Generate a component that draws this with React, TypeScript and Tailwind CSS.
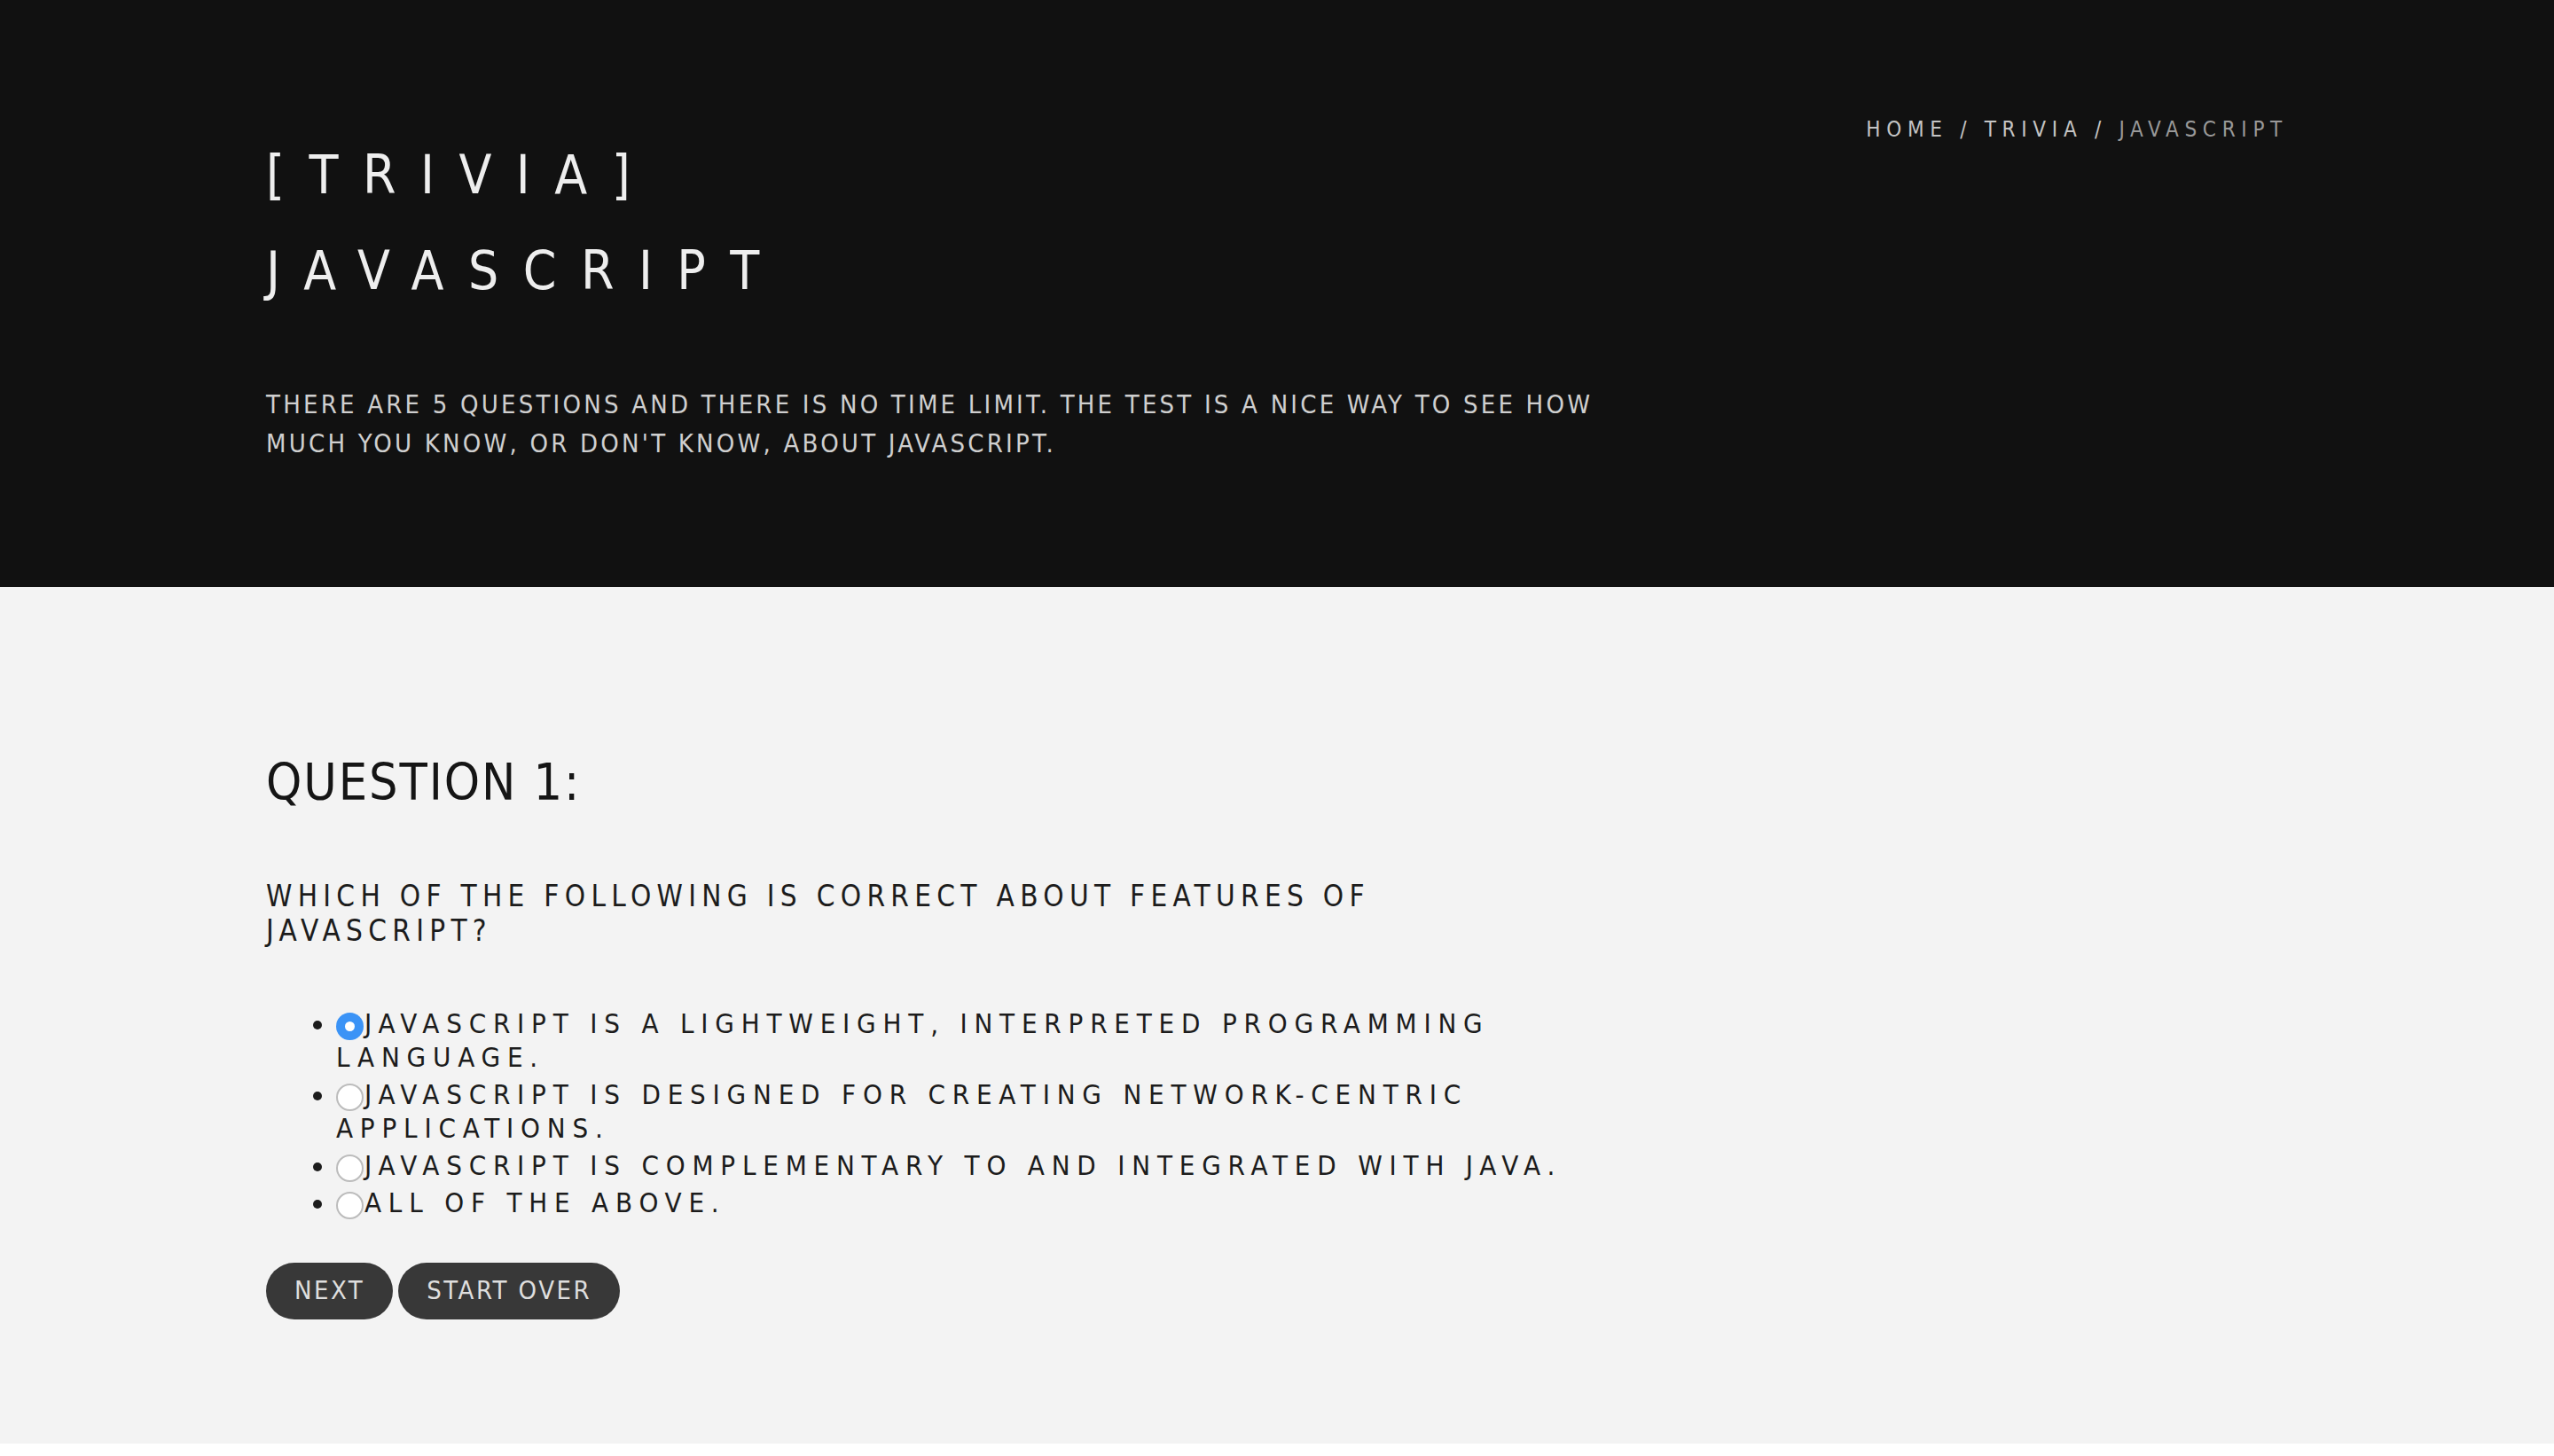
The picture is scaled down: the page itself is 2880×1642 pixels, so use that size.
import React from "react";

const FONT = "font-['Liberation_Sans_Narrow','DejaVu_Sans_Condensed',sans-serif]";

function Radio({ checked }: { checked?: boolean }) {
  if (checked) {
    return (
      <span className="relative inline-block w-[31px] h-[31px] mr-[1px] rounded-full bg-[#3b93f6] align-[-8px]">
        <span className="absolute left-[10px] top-[10px] w-[11px] h-[11px] rounded-full bg-white" />
      </span>
    );
  }
  return (
    <span className="inline-block w-[31px] h-[31px] mr-[1px] rounded-full bg-white border-[2px] border-[#bcbcbc] align-[-8px] box-border" />
  );
}

export default function App() {
  const options = [
    { text: "JAVASCRIPT IS A LIGHTWEIGHT, INTERPRETED PROGRAMMING LANGUAGE.", checked: true },
    { text: "JAVASCRIPT IS DESIGNED FOR CREATING NETWORK-CENTRIC APPLICATIONS." },
    { text: "JAVASCRIPT IS COMPLEMENTARY TO AND INTEGRATED WITH JAVA." },
    { text: "ALL OF THE ABOVE." },
  ];
  return (
    <div className={`${FONT} bg-white`}>
      <header className="bg-[#111111] px-[300px] pt-[128px] pb-[140px] flex">
        <div className="w-[1520px] shrink-0">
          <h1 className="mt-[15px] text-[60px] leading-[108px] tracking-[27.5px] text-[#eeeeee] font-normal">
            [TRIVIA]
            <br />
            JAVASCRIPT
          </h1>
          <p className="mt-[75px] text-[29px] leading-[44px] tracking-[3.2px] text-[#cfcfcf]">
            THERE ARE 5 QUESTIONS AND THERE IS NO TIME LIMIT. THE TEST IS A NICE WAY TO SEE HOW MUCH YOU KNOW, OR DON'T KNOW, ABOUT JAVASCRIPT.
          </p>
        </div>
        <nav className="flex-1 text-right text-[24px] leading-[36px] tracking-[6.7px] whitespace-nowrap">
          <span className="text-[#c4c4c4]">HOME / TRIVIA / </span>
          <span className="text-[#999999]">JAVASCRIPT</span>
        </nav>
      </header>

      <main className="bg-[#f3f3f3] px-[300px] pt-[186px] pb-[140px]">
        <div className="w-[1520px]">
          <h2 className="text-[57px] leading-[68px] tracking-[1.9px] text-[#151515] font-normal">QUESTION 1:</h2>
          <h3 className="mt-[75px] max-w-[1400px] text-[33px] leading-[39px] tracking-[6.3px] text-[#1c1c1c] font-normal">
            WHICH OF THE FOLLOWING IS CORRECT ABOUT FEATURES OF JAVASCRIPT?
          </h3>
          <ul className="mt-[66px] pl-[79px] list-disc space-y-[4px] text-[31px] leading-[38px] tracking-[7.8px] text-[#1c1c1c]">
            {options.map((o, i) => (
              <li key={i}>
                <Radio checked={o.checked} />
                {o.text}
              </li>
            ))}
          </ul>
          <div className="mt-[49px] flex gap-[6px]">
            <button className="h-[64px] px-[32px] rounded-full bg-[#383838] text-[#dedede] text-[29px] tracking-[2.5px] flex items-center">
              NEXT
            </button>
            <button className="h-[64px] px-[32px] rounded-full bg-[#383838] text-[#dedede] text-[29px] tracking-[2.5px] flex items-center">
              START OVER
            </button>
          </div>
        </div>
      </main>
    </div>
  );
}
